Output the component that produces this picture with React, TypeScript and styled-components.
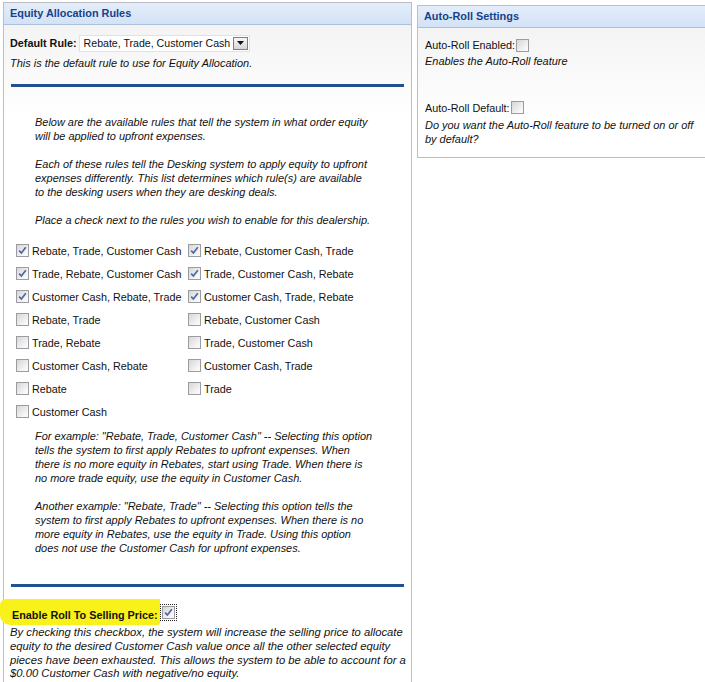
import React from 'react';
import styled, { createGlobalStyle } from 'styled-components';

const GlobalStyle = createGlobalStyle`
    body {
        margin: 0;
        background: #fff;
        font-family: 'Liberation Sans', Arial, sans-serif;
        font-size: 10.8px;
        color: #111;
    }
`;

const Page = styled.div`
    display: flex;
    align-items: flex-start;
    width: 705px;
    height: 682px;
    overflow: hidden;
`;

const Panel = styled.div<{ width: number; top: number; left: number; tall?: boolean }>`
    width: ${props => props.width}px;
    margin-top: ${props => props.top}px;
    margin-left: ${props => props.left}px;
    flex-shrink: 0;
    border: 1px solid #bcbec6;
    background: linear-gradient(#f1f1f1, #ffffff 115px);
    ${props => props.tall && 'min-height: 720px;'}
`;

const PanelHeader = styled.div`
    height: 21px;
    line-height: 21px;
    padding-left: 6px;
    background: linear-gradient(#e4edfa, #d3e2f6);
    border-bottom: 1px solid #aac0da;
    color: #15428b;
    font-weight: bold;
    font-size: 10.9px;
`;

const Body = styled.div<{ pad?: string }>`
    padding: ${props => props.pad || '0 6px'};
`;

const Row = styled.div<{ top?: number; height?: number }>`
    display: flex;
    align-items: center;
    height: ${props => props.height || 14}px;
    margin-top: ${props => props.top || 0}px;
`;

const Bold = styled.span`
    font-weight: bold;
    margin-right: 2px;
`;

const Select = styled.div`
    display: flex;
    align-items: center;
    justify-content: space-between;
    height: 17px;
    width: 171px;
    box-sizing: border-box;
    background: #fff;
    border: 1px solid #e2e2e2;
    padding: 0 1px 0 4px;
    font-size: 10.6px;
    white-space: nowrap;
`;

const SelectButton = styled.span`
    width: 15px;
    height: 13px;
    box-sizing: border-box;
    border: 1px solid #7f7f7f;
    background: linear-gradient(#f6f6f6, #d6d6d6);
    display: flex;
    align-items: center;
    justify-content: center;
`;

const Note = styled.p<{ top?: number; size?: number }>`
    margin: ${props => props.top || 0}px 0 0;
    font-style: italic;
    font-size: ${props => props.size || 10.95}px;
    line-height: 13.8px;
    white-space: nowrap;
`;

const Rule = styled.div<{ top: number }>`
    height: 3px;
    background: #23508f;
    margin: ${props => props.top}px 1px 0;
`;

const Info = styled.div<{ top: number }>`
    padding-left: 25px;
    margin-top: ${props => props.top}px;
`;

const Para = styled.p<{ gap: number }>`
    margin: 0;
    font-style: italic;
    font-size: 10.95px;
    line-height: 13.8px;
    white-space: nowrap;

    & + & {
        margin-top: ${props => props.gap}px;
    }
`;

const Grid = styled.div`
    display: grid;
    grid-template-columns: 172px 1fr;
    row-gap: 9px;
    margin: 16px 0 0 6px;
`;

const Option = styled.label`
    display: flex;
    align-items: center;
    height: 14px;
    gap: 3px;
    white-space: nowrap;
`;

const BoxWrap = styled.span<{ focus?: boolean }>`
    display: inline-flex;
    padding: ${props => (props.focus ? '2px' : '0')};
    ${props => props.focus && 'outline: 1px dotted #222; outline-offset: -1px;'}
`;

const Box = styled.span`
    width: 13px;
    height: 13px;
    box-sizing: border-box;
    border: 1px solid #9a9ca0;
    background: linear-gradient(135deg, #d6d6d6, #f8f8f8 80%);
    display: inline-flex;
    align-items: center;
    justify-content: center;
`;

const Highlight = styled.div`
    display: flex;
    align-items: center;
    margin: 12px 0 0 -10px;
`;

const Marker = styled.span`
    background: #f9f21a;
    padding: 9px 2px 3px 12px;
    line-height: 14px;
    border-radius: 6px 0 2px 10px;
    font-weight: bold;
`;

const AutoLabel = styled.span`
    margin-right: 1px;
`;

const Check = ({ on, focus }: { on?: boolean; focus?: boolean }) => (
    <BoxWrap focus={focus}>
        <Box>
            {on && (
                <svg width="9" height="9" viewBox="0 0 9 9">
                    <path d="M1.2 4.6 L3.4 7 L7.8 1.3" fill="none" stroke="#4f66a3" strokeWidth="1.7" />
                </svg>
            )}
        </Box>
    </BoxWrap>
);

const rules: [string, boolean][] = [
    ['Rebate, Trade, Customer Cash', true],
    ['Rebate, Customer Cash, Trade', true],
    ['Trade, Rebate, Customer Cash', true],
    ['Trade, Customer Cash, Rebate', true],
    ['Customer Cash, Rebate, Trade', true],
    ['Customer Cash, Trade, Rebate', true],
    ['Rebate, Trade', false],
    ['Rebate, Customer Cash', false],
    ['Trade, Rebate', false],
    ['Trade, Customer Cash', false],
    ['Customer Cash, Rebate', false],
    ['Customer Cash, Trade', false],
    ['Rebate', false],
    ['Trade', false],
    ['Customer Cash', false],
];

// paragraphs are kept in the line breaks of the original page
const Lines = ({ lines }: { lines: string[] }) => (
    <>
        {lines.map((line, i) => (
            <React.Fragment key={i}>
                {i > 0 && <br />}
                {line}
            </React.Fragment>
        ))}
    </>
);

export default function App() {
    return (
        <Page>
            <GlobalStyle />
            <Panel width={407} top={2} left={3} tall>
                <PanelHeader>Equity Allocation Rules</PanelHeader>
                <Body>
                    <Row top={9} height={18}>
                        <Bold>Default Rule:</Bold>
                        <Select>
                            <span>Rebate, Trade, Customer Cash</span>
                            <SelectButton>
                                <svg width="7" height="4" viewBox="0 0 7 4">
                                    <path d="M0 0 H7 L3.5 4 Z" fill="#111" />
                                </svg>
                            </SelectButton>
                        </Select>
                    </Row>
                    <Note top={5}>This is the default rule to use for Equity Allocation.</Note>
                    <Rule top={13} />
                    <Info top={29}>
                        <Para gap={13.8}>
                            <Lines
                                lines={[
                                    'Below are the available rules that tell the system in what order equity',
                                    'will be applied to upfront expenses.',
                                ]}
                            />
                        </Para>
                        <Para gap={13.8}>
                            <Lines
                                lines={[
                                    'Each of these rules tell the Desking system to apply equity to upfront',
                                    'expenses differently. This list determines which rule(s) are available',
                                    'to the desking users when they are desking deals.',
                                ]}
                            />
                        </Para>
                        <Para gap={13.8}>
                            Place a check next to the rules you wish to enable for this dealership.
                        </Para>
                    </Info>
                    <Grid>
                        {rules.map(([label, on]) => (
                            <Option key={label}>
                                <Check on={on} />
                                {label}
                            </Option>
                        ))}
                    </Grid>
                    <Info top={11.5}>
                        <Para gap={14.7}>
                            <Lines
                                lines={[
                                    'For example: "Rebate, Trade, Customer Cash" -- Selecting this option',
                                    'tells the system to first apply Rebates to upfront expenses. When',
                                    'there is no more equity in Rebates, start using Trade. When there is',
                                    'no more trade equity, use the equity in Customer Cash.',
                                ]}
                            />
                        </Para>
                        <Para gap={14.7}>
                            <Lines
                                lines={[
                                    'Another example: "Rebate, Trade" -- Selecting this option tells the',
                                    'system to first apply Rebates to upfront expenses. When there is no',
                                    'more equity in Rebates, use the equity in Trade. Using this option',
                                    'does not use the Customer Cash for upfront expenses.',
                                ]}
                            />
                        </Para>
                    </Info>
                    <Rule top={28.5} />
                    <Highlight>
                        <Marker>Enable Roll To Selling Price:</Marker>
                        <Check on focus />
                    </Highlight>
                    <Note top={1} size={11.25}>
                        <Lines
                            lines={[
                                'By checking this checkbox, the system will increase the selling price to allocate',
                                'equity to the desired Customer Cash value once all the other selected equity',
                                'pieces have been exhausted. This allows the system to be able to account for a',
                                '$0.00 Customer Cash with negative/no equity.',
                            ]}
                        />
                    </Note>
                </Body>
            </Panel>
            <Panel width={300} top={5} left={5}>
                <PanelHeader>Auto-Roll Settings</PanelHeader>
                <Body pad="0 7px 10px">
                    <Row top={10}>
                        <AutoLabel>Auto-Roll Enabled:</AutoLabel>
                        <Check />
                    </Row>
                    <Note top={3.4}>Enables the Auto-Roll feature</Note>
                    <Row top={31.6}>
                        <AutoLabel>Auto-Roll Default:</AutoLabel>
                        <Check />
                    </Row>
                    <Note top={4.4}>
                        <Lines
                            lines={['Do you want the Auto-Roll feature to be turned on or off', 'by default?']}
                        />
                    </Note>
                </Body>
            </Panel>
        </Page>
    );
}
